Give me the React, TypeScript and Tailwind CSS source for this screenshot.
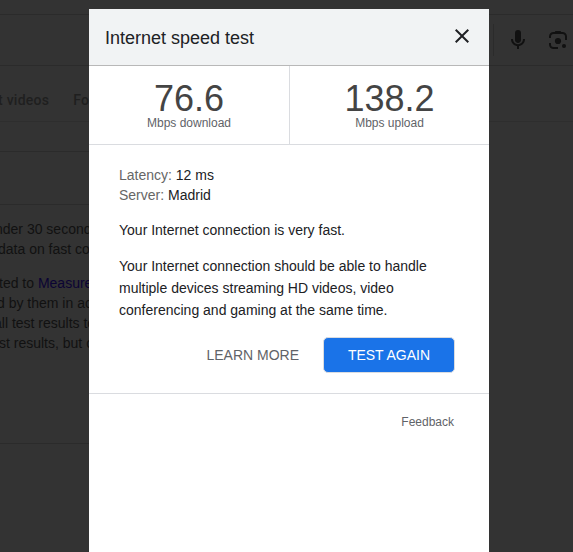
import React from 'react';

const MicIcon = () => (
  <svg width="24" height="24" viewBox="0 0 24 24" fill="#111111" className="shrink-0">
    <path d="M12 15c1.66 0 3-1.31 3-2.97V4.97a3 3 0 0 0-6 0v7.06C9 13.69 10.34 15 12 15z" />
    <path d="M11 17.500h2V21h-2z" />
    <path d="M12 18.100c-4 0-7-2.900-7-7.100h2c0 3 2.200 5.200 5 5.200s5-2.200 5-5.200h2c0 4.200-3 7.100-7 7.100z" />
  </svg>
);

const LensIcon = () => (
  <svg width="24" height="24" viewBox="0 0 24 24" fill="none" stroke="#111111" strokeWidth="2" className="shrink-0">
    <path d="M4 10V8.500a3.500 3.500 0 0 1 3.500-3.500h9A3.500 3.500 0 0 1 20 8.500V12" />
    <path d="M4 15v1.500A3.500 3.500 0 0 0 7.500 20H12" />
    <path d="M8.300 4.500L9.500 3h5l1.200 1.500z" fill="#111111" stroke="none" />
    <circle cx="12" cy="13" r="3.100" fill="#111111" stroke="none" />
    <circle cx="18" cy="18" r="2" fill="#111111" stroke="none" />
  </svg>
);

const CloseIcon = () => (
  <svg width="24" height="24" viewBox="0 0 24 24" fill="#202124">
    <path d="M19 6.41L17.590 5 12 10.590 6.410 5 5 6.410 10.590 12 5 17.590 6.410 19 12 13.410 17.590 19 19 17.590 13.410 12z" />
  </svg>
);

const speeds = [
  { value: '76.6', label: 'Mbps download' },
  { value: '138.2', label: 'Mbps upload' },
];

const SearchPage = () => (
  <div className="h-full overflow-hidden whitespace-nowrap bg-[#333333] text-sm leading-5 text-[#111111]">
    <div className="mt-[14px] flex h-[52px] items-center justify-end border-y border-[#2b2b2b] pr-[3px]">
      <div className="h-8 w-px bg-[#2b2b2b]" />
      <div className="ml-3 flex gap-4">
        <MicIcon />
        <LensIcon />
      </div>
    </div>
    <div className="flex h-14 items-center gap-6 border-b border-[#2e2e2e] pt-3 font-['Roboto',sans-serif] font-medium tracking-[0.25px] text-[#1f1f1f]">
      <span className="-ml-[2px]">t videos</span>
      <span>For</span>
    </div>
    <div className="mt-[29px] h-[293px] w-[89px] overflow-hidden border-y border-[#2b2b2b]">
      <div className="mt-[52px] border-t border-[#2b2b2b] pt-[14px]">
        <p className="-ml-[5px]">nder 30 second</p>
        <p className="-ml-[2px]">data on fast co</p>
        <p className="-ml-px mt-[14px]">ted to <span className="text-[#0b0433]">Measure</span></p>
        <p className="-ml-[3px]">d by them in ac</p>
        <p className="-ml-[6px]">all test results to</p>
        <p className="-ml-[1px]">st results, but c</p>
      </div>
    </div>
  </div>
);

const SpeedDialog = () => (
  <div className="absolute left-[89px] top-[9px] h-[543px] w-[400px] bg-white">
    <div className="flex h-[57px] items-center justify-between border-b border-[#b8b8b8] bg-[#f1f3f4] pl-4 pr-[15px]">
      <h1 className="pt-0.5 text-lg text-[#202124]">Internet speed test</h1>
      <button className="-mt-0.5" aria-label="Close">
        <CloseIcon />
      </button>
    </div>
    <div className="grid h-[79px] grid-cols-[201px_199px] border-b border-[#dadce0] text-center">
      {speeds.map((speed) => (
        <div key={speed.label} className="border-[#dadce0] pt-[14px] first:border-r">
          <div className="pt-px text-[36px] leading-[35px] text-[#444444]">{speed.value}</div>
          <div className="text-xs leading-[14px] text-[#5f6368]">{speed.label}</div>
        </div>
      ))}
    </div>
    <div className="h-[249px] border-b border-[#dadce0] px-[30px] pt-5 text-sm text-[#202124]">
      <div className="leading-5">
        <p><span className="text-[#666666]">Latency:</span> 12 ms</p>
        <p><span className="text-[#666666]">Server:</span> Madrid</p>
      </div>
      <p className="mt-[14px] leading-[22px]">Your Internet connection is very fast.</p>
      <p className="mt-[14px] leading-[22px]">Your Internet connection should be able to handle multiple devices streaming HD videos, video conferencing and gaming at the same time.</p>
      <div className="mt-4 flex items-center justify-end pr-1">
        <button className="mr-6 text-[#5f6368]">LEARN MORE</button>
        <button className="h-9 w-[132px] rounded-[5px] border border-[#dadce0] bg-[#1a73e8] text-white">TEST AGAIN</button>
      </div>
    </div>
    <div className="pr-[35px] pt-5 text-right text-xs text-[#5f6368]">Feedback</div>
  </div>
);

const App = () => {
  return (
    <div className="relative h-screen w-full overflow-hidden bg-[#333333] font-['Liberation_Sans',Arial,sans-serif]">
      <SearchPage />
      <SpeedDialog />
    </div>
  );
};

export default App;
